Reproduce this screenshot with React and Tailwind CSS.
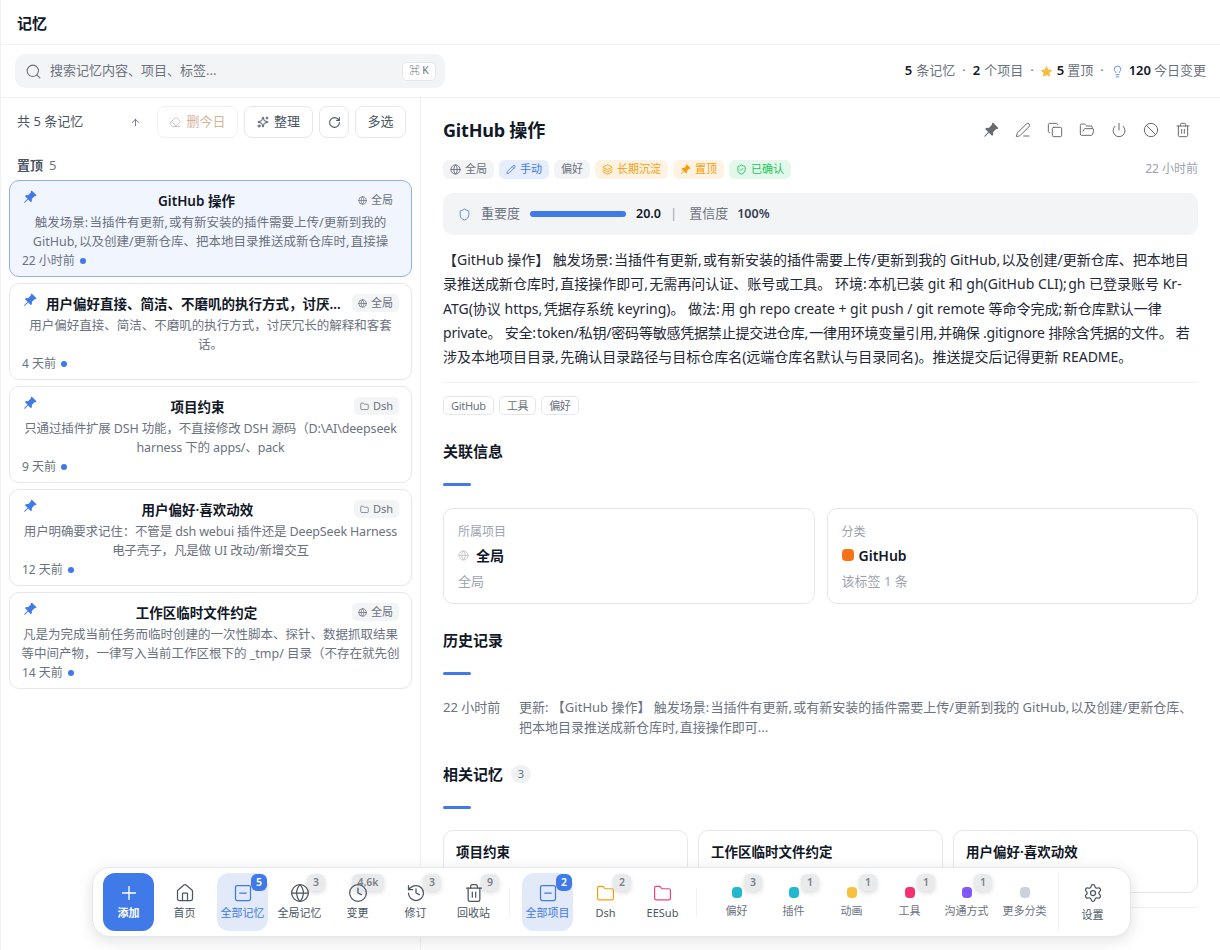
import React from 'react';
import { Search, Eraser, Sparkles, RotateCw, ArrowUp, Globe, PenLine, Copy, FolderOpen, Power, Ban, Trash2, Pencil, Layers, ShieldCheck, Shield, House, Clock, History, Lightbulb, Settings, Plus, SquareMinus, Folder } from 'lucide-react';
import { BsPinAngleFill, BsStarFill } from 'react-icons/bs';

const font = '"Noto Sans", "Noto Sans CJK SC", sans-serif';
const sp = (s) => s.replace(/([,:;])(?=\S)/g, '$1\u200a');

const memories = [
  { title: 'GitHub 操作', scope: '全局', globe: true, active: true, time: '22 小时前', desc: sp('触发场景:当插件有更新,或有新安装的插件需要上传/更新到我的 GitHub,以及创建/更新仓库、把本地目录推送成新仓库时,直接操作即可,无需再问认证、账号或工具。') },
  { title: '用户偏好直接、简洁、不磨叽的执行方式\uFF0C讨厌冗长的解释和客套话。', scope: '全局', globe: true, time: '4 天前', desc: '用户偏好直接、简洁、不磨叽的执行方式\uFF0C讨厌冗长的解释和客套话。' },
  { title: '项目约束', scope: 'Dsh', tight: true, time: '9 天前', desc: '只通过插件扩展 DSH 功能\uFF0C不直接修改 DSH 源码\uFF08D:\\AI\\deepseek harness 下的 apps/、pack' },
  { title: '用户偏好·喜欢动效', scope: 'Dsh', tight: true, time: '12 天前', desc: '用户明确要求记住\uFF1A不管是 dsh webui 插件还是 DeepSeek Harness 电子壳子\uFF0C凡是做 UI 改动/新增交互' },
  { title: '工作区临时文件约定', scope: '全局', globe: true, time: '14 天前', desc: '凡是为完成当前任务而临时创建的一次性脚本、探针、数据抓取结果等中间产物\uFF0C一律写入当前工作区根下的 _tmp/ 目录\uFF08不存在就先创建\uFF0C任务完成后清理\uFF09。' },
];

function MemoryCard({ m }) {
  return (
    <div className={`rounded-[10px] border px-[12px] pt-[6px] h-[97px] ${m.active ? 'bg-[#f1f5fe] border-[#8fb0ef]' : 'bg-white border-[#e5e7eb]'}`}>
      <div className="flex items-center h-[28px] gap-1">
        <BsPinAngleFill className="text-[#4079e8] w-[14px] h-[14px] shrink-0 -mt-[8px] ml-[1px]" />
        <div className="flex-1 min-w-0 text-center text-[13.5px] font-semibold text-[#111827] truncate pl-[5px] pr-[1px]">{m.title}</div>
        <span className={`shrink-0 h-[18px] -mt-[2px] flex items-center gap-[4px] rounded-[5px] px-[6px] text-[11px] text-[#6b7280] ${m.active ? 'bg-[#f3f6fc]' : 'bg-[#f3f4f6]'}`}>
          {m.globe ? <Globe className="w-[9px] h-[9px]" /> : <Folder className="w-[9px] h-[9px]" />}
          {m.scope}
        </span>
      </div>
      <p className={`text-[12.5px] leading-[19px] text-[#6b7280] text-center overflow-hidden h-[38px] -mt-[2px] ${m.active ? 'mx-[6px]' : '-mx-[3px]'} ${m.tight ? 'tracking-[-0.15px]' : ''}`}>{m.desc}</p>
      <div className="flex items-center gap-[5px] text-[12px] text-[#6b7280] h-[20px]">
        {m.time}
        <span className="w-[6px] h-[6px] rounded-full bg-[#4079e8]" />
      </div>
    </div>
  );
}

function Tag({ cls, icon, children }) {
  return (
    <span className={`h-[19px] flex items-center gap-[4px] rounded-[6px] px-[7px] text-[11px] ${cls}`}>
      {icon}
      {children}
    </span>
  );
}

function SectionTitle({ children, badge }) {
  return (
    <div>
      <div className="flex items-center gap-2 h-[22px]">
        <h3 className="text-[15px] font-semibold text-[#111827]">{children}</h3>
        {badge && <span className="w-[20px] h-[18px] rounded-full bg-[#f0f1f3] text-[11px] text-[#6b7280] flex items-center justify-center">{badge}</span>}
      </div>
      <div className="w-[28px] h-[3px] rounded-full bg-[#4079e8] mt-[21px]" />
    </div>
  );
}

function Badge({ children, primary, wide }) {
  return (
    <span className={`absolute top-[1px] h-[17px] rounded-[6px] flex items-center justify-center text-[10.5px] font-semibold ${wide ? 'left-[20px] w-[32px]' : primary ? 'left-[34px] w-[16px]' : 'left-[33px] w-[18px]'} ${primary ? 'bg-[#4079e8] text-white' : 'bg-[#e9eaec] text-[#7b8088] shadow-[0_2px_5px_rgba(0,0,0,0.14)]'}`}>
      {children}
    </span>
  );
}

function DockItem({ icon, label, badge, active, wide, low }) {
  return (
    <div className={`relative shrink-0 w-[51px] h-[58px] rounded-[12px] flex flex-col items-center pt-[9px] ${active ? 'bg-[#e2eafa] text-[#4079e8]' : 'text-[#4b5563]'}`}>
      {badge && <Badge primary={active} wide={wide}>{badge}</Badge>}
      <div className={`relative h-[22px] flex items-center justify-center ${low ? 'mb-[4px]' : 'mb-[2px]'}`}>{icon}</div>
      <span className="relative text-[11px] leading-[14px] whitespace-nowrap">{label}</span>
    </div>
  );
}

function Cat({ color, label, badge }) {
  return (
    <div className="relative shrink-0 w-[51px] h-[58px] flex flex-col items-center pt-[14px] text-[#6b7280]">
      <span className="w-[10px] h-[11px] rounded-[4px] mb-[6px]" style={{ backgroundColor: color }} />
      <span className="text-[11px] leading-[14px] whitespace-nowrap">{label}</span>
      {badge && <Badge>{badge}</Badge>}
    </div>
  );
}

const para1 = sp('【GitHub 操作】 触发场景:当插件有更新,或有新安装的插件需要上传/更新到我的 GitHub,以及创建/更新仓库、把本地目录推送成新仓库时,直接操作即可,无需再问认证、账号或工具。 环境:本机已装 git 和 gh(GitHub CLI);gh 已登录账号 Kr-ATG(协议 https,凭据存系统 keyring)。 做法:用 gh repo create + git push / git remote 等命令完成;新仓库默认一律 ');
const para2 = sp('private。 安全:token/私钥/密码等敏感凭据禁止提交进仓库,一律用环境变量引用,并确保 .gitignore 排除含凭据的文件。 若');
const para3 = sp('涉及本地项目目录,先确认目录路径与目标仓库名(远端仓库名默认与目录同名)。推送提交后记得更新 README。');

export default function App() {
  return (
    <div className="relative w-[1220px] h-[950px] overflow-hidden bg-white text-[#111827] border-l border-[#f0f1f3]" style={{ fontFamily: font }}>
      <header className="h-[45px] border-b border-[#f0f1f3] flex items-center pl-[16px] pt-[3px]">
        <h1 className="text-[15px] font-bold">记忆</h1>
      </header>
      <div className="h-[53px] border-b border-[#f0f1f3] flex items-center justify-between pl-[14px] pr-[14px]">
        <div className="w-[430px] h-[34px] rounded-[10px] bg-[#f3f4f6] flex items-center pl-[10px] pr-[9px]">
          <Search className="w-[17px] h-[17px] text-[#6b7280]" strokeWidth={1.5} />
          <span className="ml-[8px] text-[13px] text-[#6b7280]">搜索记忆内容、项目、标签...</span>
          <span className="ml-auto h-[19px] w-[34px] rounded-[5px] bg-white border border-[#e5e7eb] text-[10.5px] text-[#6b7280] flex items-center justify-center">⌘ K</span>
        </div>
        <div className="flex items-center text-[13px] text-[#6b7280]">
          <b className="font-semibold text-[#111827] mr-[4px]">5</b>条记忆
          <span className="mx-[7px]">·</span>
          <b className="font-semibold text-[#111827] mr-[4px]">2</b>个项目
          <span className="mx-[7px]">·</span>
          <BsStarFill className="w-[11px] h-[11px] text-[#f6bd3f] mr-[5px]" />
          <b className="font-semibold text-[#111827] mr-[3px]">5</b>置顶
          <span className="mx-[7px]">·</span>
          <Lightbulb className="w-[13px] h-[13px] text-[#4079e8] mr-[5px]" strokeWidth={1.5} />
          <b className="font-semibold text-[#111827] mr-[3px]">120</b>今日变更
        </div>
      </div>
      <div className="flex h-[852px]">
        <aside className="w-[420px] shrink-0 border-r border-[#f0f1f3] px-[8px]">
          <div className="h-[48px] flex items-center pl-[8px] pr-[6px]">
            <span className="text-[13px] text-[#4b5563]">共 5 条记忆</span>
            <ArrowUp className="w-[11px] h-[11px] text-[#6b7280] ml-[47px]" />
            <div className="ml-auto flex items-center gap-[6px]">
              <button className="h-[32px] w-[81px] rounded-[8px] border border-[#f0f1f3] flex items-center justify-center gap-[5px] text-[13px] text-[#d3b59c]">
                <Eraser className="w-[12px] h-[12px] text-[#c4c7cc]" />删今日
              </button>
              <button className="h-[32px] w-[69px] rounded-[8px] border border-[#e5e7eb] flex items-center justify-center gap-[5px] text-[13px] text-[#4b5563]">
                <Sparkles className="w-[12px] h-[12px]" />整理
              </button>
              <button className="h-[32px] w-[30px] rounded-[8px] border border-[#e5e7eb] flex items-center justify-center text-[#4b5563]">
                <RotateCw className="w-[13px] h-[13px]" />
              </button>
              <button className="h-[32px] w-[51px] rounded-[8px] border border-[#e5e7eb] flex items-center justify-center text-[13px] text-[#4b5563]">多选</button>
            </div>
          </div>
          <div className="flex items-center gap-[6px] pl-[8px] mt-[10px] h-[20px] text-[13px]">
            <span className="font-semibold text-[#4b5563]">置顶</span>
            <span className="text-[#6b7280]">5</span>
          </div>
          <div className="mt-[4px] flex flex-col gap-[6px]">
            {memories.map((m) => <MemoryCard key={m.title} m={m} />)}
          </div>
        </aside>
        <main className="flex-1 min-w-0 pl-[22px] pr-[22px] pt-[19px]">
          <div className="flex items-center justify-between h-[26px]">
            <h2 className="text-[18px] font-bold tracking-[-0.2px]">GitHub 操作</h2>
            <div className="flex items-center gap-[16px] pr-[7px] text-[#666b73]">
              <BsPinAngleFill className="w-[16px] h-[16px]" />
              <PenLine className="w-[16px] h-[16px]" strokeWidth={1.5} />
              <Copy className="w-[16px] h-[16px]" strokeWidth={1.5} />
              <FolderOpen className="w-[16px] h-[16px]" strokeWidth={1.5} />
              <Power className="w-[16px] h-[16px]" strokeWidth={1.5} />
              <Ban className="w-[16px] h-[16px]" strokeWidth={1.5} />
              <Trash2 className="w-[16px] h-[16px]" strokeWidth={1.5} />
            </div>
          </div>
          <div className="flex items-center gap-[5px] mt-[16px] h-[20px]">
            <Tag cls="bg-[#f3f4f6] text-[#6b7280]" icon={<Globe className="w-[11px] h-[11px]" />}>全局</Tag>
            <Tag cls="bg-[#e6edfc] text-[#4079e8]" icon={<Pencil className="w-[10px] h-[11px]" />}>手动</Tag>
            <Tag cls="bg-[#f3f4f6] text-[#6b7280]">偏好</Tag>
            <Tag cls="bg-[#fef3e2] text-[#f59e0b]" icon={<Layers className="w-[11px] h-[11px]" />}>长期沉淀</Tag>
            <Tag cls="bg-[#fef3e2] text-[#f59e0b]" icon={<BsPinAngleFill className="w-[11px] h-[11px]" />}>置顶</Tag>
            <Tag cls="bg-[#e3f8ea] text-[#22c55e]" icon={<ShieldCheck className="w-[11px] h-[11px]" />}>已确认</Tag>
            <span className="ml-auto text-[12px] text-[#9ca3af]">22 小时前</span>
          </div>
          <div className="mt-[14px] h-[42px] rounded-[10px] bg-[#f3f4f6] flex items-center pl-[15px] text-[13px]">
            <Shield className="w-[13px] h-[13px] text-[#4079e8]" strokeWidth={1.5} />
            <span className="ml-[10px] text-[#6b7280]">重要度</span>
            <span className="ml-[10px] w-[96px] h-[6px] rounded-full bg-[#4079e8]" />
            <span className="ml-[10px] w-[24px] text-[12.5px] font-semibold text-[#111827]">20.0</span>
            <span className="ml-[10px] mr-[12px] text-[#9ca3af]">|</span>
            <span className="text-[#6b7280]">置信度</span>
            <span className="ml-[9px] text-[12.5px] font-semibold text-[#374151]">100%</span>
          </div>
          <p className="mt-[13px] text-[14px] leading-[24.3px] text-[#1f2937]">
            {para1}
            <span className="tracking-[-0.2px]">{para2}</span>
            {para3}
          </p>
          <div className="mt-[13px] border-t border-[#f0f1f3] pt-[13px] flex gap-[5px]">
            {['GitHub', '工具', '偏好'].map((t) => (
              <span key={t} className="h-[19px] rounded-[5px] border border-[#e5e7eb] px-[7px] flex items-center text-[11px] tracking-[-0.3px] text-[#6b7280]">{t}</span>
            ))}
          </div>
          <div className="mt-[25px]"><SectionTitle>关联信息</SectionTitle></div>
          <div className="mt-[22px] grid grid-cols-2 gap-[12px]">
            <div className="h-[96px] rounded-[10px] border border-[#e5e7eb] px-[14px] pt-[15px]">
              <div className="text-[12px] leading-[16px] text-[#9ca3af]">所属项目</div>
              <div className="flex items-center gap-[7px] mt-[6px] h-[18px]">
                <Globe className="w-[11px] h-[11px] text-[#c4c7cc]" />
                <span className="text-[14px] font-semibold">全局</span>
              </div>
              <div className="mt-[8px] text-[13px] text-[#9ca3af]">全局</div>
            </div>
            <div className="h-[96px] rounded-[10px] border border-[#e5e7eb] px-[14px] pt-[15px]">
              <div className="text-[12px] leading-[16px] text-[#9ca3af]">分类</div>
              <div className="flex items-center gap-[5px] mt-[6px] h-[18px]">
                <span className="w-[12px] h-[12px] rounded-[4px] bg-[#f97316]" />
                <span className="text-[14px] font-semibold">GitHub</span>
              </div>
              <div className="mt-[8px] text-[13px] text-[#9ca3af]">该标签 1 条</div>
            </div>
          </div>
          <div className="mt-[25px]"><SectionTitle>历史记录</SectionTitle></div>
          <div className="mt-[22px] flex text-[13px] leading-[20px]">
            <span className="w-[76px] shrink-0 text-[#6b7280]">22 小时前</span>
            <span className="text-[#6b7280]">{sp('更新: 【GitHub 操作】 触发场景:当插件有更新,或有新安装的插件需要上传/更新到我的 GitHub,以及创建/更新仓库、把本地目录推送成新仓库时,直接操作即可...')}</span>
          </div>
          <div className="mt-[26px]"><SectionTitle badge="3">相关记忆</SectionTitle></div>
          <div className="mt-[21px] grid grid-cols-3 gap-[10px]">
            {['项目约束', '工作区临时文件约定', '用户偏好·喜欢动效'].map((t) => (
              <div key={t} className="h-[63px] rounded-[10px] border border-[#e5e7eb] px-[12px] pt-[11px] text-[13.5px] font-semibold">{t}</div>
            ))}
          </div>
          <div className="mt-[14px] border-t border-[#f0f1f3]" />
        </main>
      </div>

      <nav className="absolute left-[91px] top-[867px] w-[1039px] h-[70px] rounded-[18px] bg-white border border-[#e5e7eb] shadow-[0_4px_16px_rgba(0,0,0,0.12)] flex items-center pl-[10px]">
        <div className="shrink-0 w-[51px] h-[58px] rounded-[12px] bg-[#4079e8] text-white flex flex-col items-center pt-[9px]">
          <Plus className="w-[22px] h-[22px] mb-[2px]" strokeWidth={1.5} />
          <span className="text-[11px] leading-[14px] font-semibold">添加</span>
        </div>
        <div className="ml-[5px]"><DockItem icon={<House className="w-[20px] h-[20px]" strokeWidth={1.5} />} label="首页" /></div>
        <div className="ml-[7px]"><DockItem active badge="5" icon={<SquareMinus className="w-[20px] h-[20px]" strokeWidth={1.5} />} label="全部记忆" /></div>
        <div className="ml-[6px]"><DockItem badge="3" icon={<Globe className="w-[20px] h-[20px]" strokeWidth={1.5} />} label="全局记忆" /></div>
        <div className="ml-[7px]"><DockItem wide badge="4.6k" icon={<Clock className="w-[20px] h-[20px]" strokeWidth={1.5} />} label="变更" /></div>
        <div className="ml-[7px]"><DockItem badge="3" icon={<History className="w-[20px] h-[20px]" strokeWidth={1.5} />} label="修订" /></div>
        <div className="ml-[7px]"><DockItem badge="9" icon={<Trash2 className="w-[20px] h-[20px]" strokeWidth={1.5} />} label="回收站" /></div>
        <span className="w-px h-[28px] bg-[#f0f1f3] ml-[10px] mr-[12px]" />
        <DockItem active badge="2" icon={<SquareMinus className="w-[20px] h-[20px]" strokeWidth={1.5} />} label="全部项目" />
        <div className="ml-[7px]"><DockItem badge="2" icon={<Folder className="w-[19px] h-[19px] text-[#f59e0b]" strokeWidth={1.5} />} label="Dsh" /></div>
        <div className="ml-[6px]"><DockItem icon={<Folder className="w-[19px] h-[19px] text-[#f43f7f]" strokeWidth={1.5} />} label="EESub" /></div>
        <span className="w-px h-[28px] bg-[#f0f1f3] ml-[8px] mr-[14px]" />
        <Cat color="#22b8cf" label="偏好" badge="3" />
        <div className="ml-[6px]"><Cat color="#22b8cf" label="插件" badge="1" /></div>
        <div className="ml-[7px]"><Cat color="#f6c23e" label="动画" badge="1" /></div>
        <div className="ml-[7px]"><Cat color="#f43070" label="工具" badge="1" /></div>
        <div className="ml-[6px]"><Cat color="#8057f9" label="沟通方式" badge="1" /></div>
        <div className="ml-[7px]"><Cat color="#cbd2dc" label="更多分类" /></div>
        <span className="w-px h-[58px] bg-[#f0f1f3] ml-[8px] mr-[8px]" />
        <DockItem low icon={<Settings className="w-[20px] h-[20px]" strokeWidth={1.5} />} label="设置" />
      </nav>
    </div>
  );
}
